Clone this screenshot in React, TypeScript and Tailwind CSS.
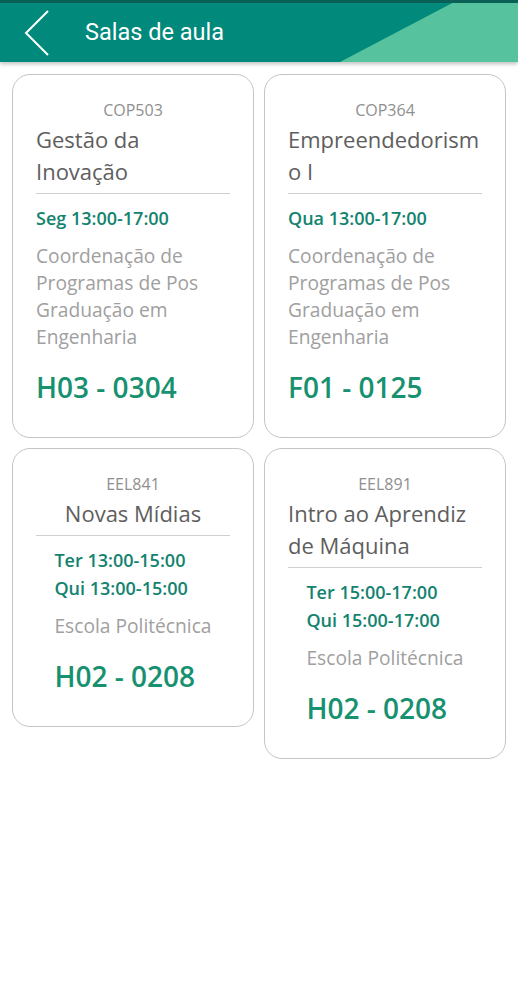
import React from "react";

type Course = {
  code: string;
  title: string;
  times: string[];
  dept: string;
  room: string;
};

const courses: Course[] = [
  {
    code: "COP503",
    title: "Gestão da Inovação",
    times: ["Seg 13:00-17:00"],
    dept: "Coordenação de Programas de Pos Graduação em Engenharia",
    room: "H03 - 0304",
  },
  {
    code: "COP364",
    title: "Empreendedorismo I",
    times: ["Qua 13:00-17:00"],
    dept: "Coordenação de Programas de Pos Graduação em Engenharia",
    room: "F01 - 0125",
  },
  {
    code: "EEL841",
    title: "Novas Mídias",
    times: ["Ter 13:00-15:00", "Qui 13:00-15:00"],
    dept: "Escola Politécnica",
    room: "H02 - 0208",
  },
  {
    code: "EEL891",
    title: "Intro ao Aprendiz de Máquina",
    times: ["Ter 15:00-17:00", "Qui 15:00-17:00"],
    dept: "Escola Politécnica",
    room: "H02 - 0208",
  },
];

function Card({ c }: { c: Course }) {
  return (
    <div className="flex flex-col items-center rounded-[18px] border border-[#c4c4c4] bg-white px-[23px] pt-[25px] pb-[32px]">
      <div className="text-[16px] leading-[20px] text-[#8f8f8f]">{c.code}</div>
      <div className="mt-[3px] w-fit max-w-full text-left text-[22px] font-medium leading-[32px] text-[#5e5e5e] [overflow-wrap:anywhere]">
        {c.title}
      </div>
      <div className="mt-[6px] h-px w-full bg-[#cfcfcf]" />
      <div className="mt-[10px] w-fit max-w-full text-left">
        {c.times.map((t) => (
          <div key={t} className="text-[18px] leading-[28px] font-semibold text-[#13836f]">
            {t}
          </div>
        ))}
        <div className="mt-[10px] text-[19.2px] leading-[27px] text-[#a0a0a0]">{c.dept}</div>
        <div className="mt-[19px] text-[28px] leading-[36px] font-semibold text-[#17916f]">{c.room}</div>
      </div>
    </div>
  );
}

export default function App() {
  return (
    <div
      className="min-h-[1000px] w-full bg-white"
      style={{ fontFamily: '"Open Sans", "Noto Sans", sans-serif' }}
    >
      <div className="relative h-[62px] overflow-hidden bg-[#01897b] shadow-[0_2px_4px_rgba(0,0,0,0.25)]">
        <svg className="absolute inset-0 h-full w-full" viewBox="0 0 518 62" preserveAspectRatio="none">
          <polygon points="458,0 518,0 518,62 340,62" fill="#56c39e" />
          <rect x="0" y="0" width="518" height="3" fill="#0a5f56" />
        </svg>
        <div className="relative flex h-full items-center pt-[3px]">
          <svg width="60" height="59" viewBox="0 0 60 59" className="shrink-0">
            <polyline points="48,8 26,30 48,52" fill="none" stroke="white" strokeWidth="2" />
          </svg>
          <div
            className="ml-[25px] text-[23.5px] text-white"
            style={{ fontFamily: "Roboto, sans-serif" }}
          >
            Salas de aula
          </div>
        </div>
      </div>
      <div className="grid grid-cols-2 items-start gap-x-[10px] gap-y-[10px] px-[12px] pt-[12px]">
        {courses.map((c) => (
          <Card key={c.code} c={c} />
        ))}
      </div>
    </div>
  );
}
